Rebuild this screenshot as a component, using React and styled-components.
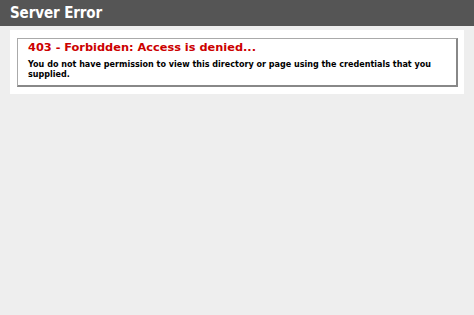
import React from 'react';
import styled, { createGlobalStyle } from 'styled-components';

const Global = createGlobalStyle`
  html, body {
    margin: 0;
    padding: 0;
    background: #eeeeee;
    height: 100%;
  }
  body {
    font-family: "DejaVu Sans", Verdana, sans-serif;
  }
`;

const Page = styled.div`
  width: 474px;
  height: 315px;
  background: #eeeeee;
`;

const Header = styled.div`
  height: 26px;
  background: #555555;
  display: flex;
  align-items: center;
  padding: 0 0 1px 10px;
  box-sizing: border-box;
`;

const Title = styled.h1`
  margin: 0;
  color: #ffffff;
  font-family: "DejaVu Sans Condensed", "DejaVu Sans", sans-serif;
  font-size: 15px;
  font-weight: bold;
  letter-spacing: -0.1px;
`;

const Content = styled.div`
  margin: 4px 10px 0 10px;
  background: #ffffff;
  padding: 8px 6px 7px 7px;
`;

const Fieldset = styled.div`
  border-style: solid;
  border-width: 1px 2px 2px 1px;
  border-color: #aaaaaa #888888 #888888 #aaaaaa;
  padding: 0 10px 4px 10px;
`;

const Heading = styled.h2`
  margin: 0;
  padding-top: 1px;
  color: #cc0000;
  font-size: 11.35px;
  font-weight: bold;
  line-height: 14px;
`;

const Message = styled.h3`
  margin: 5.5px 0 0 0;
  color: #000000;
  font-size: 8.05px;
  font-weight: bold;
  line-height: 10.5px;
`;

export default function App() {
  return (
    <>
      <Global />
      <Page>
        <Header>
          <Title>Server Error</Title>
        </Header>
        <Content>
          <Fieldset>
            <Heading>403 - Forbidden: Access is denied...</Heading>
            <Message>
              You do not have permission to view this directory or page using the credentials that you supplied.
            </Message>
          </Fieldset>
        </Content>
      </Page>
    </>
  );
}
